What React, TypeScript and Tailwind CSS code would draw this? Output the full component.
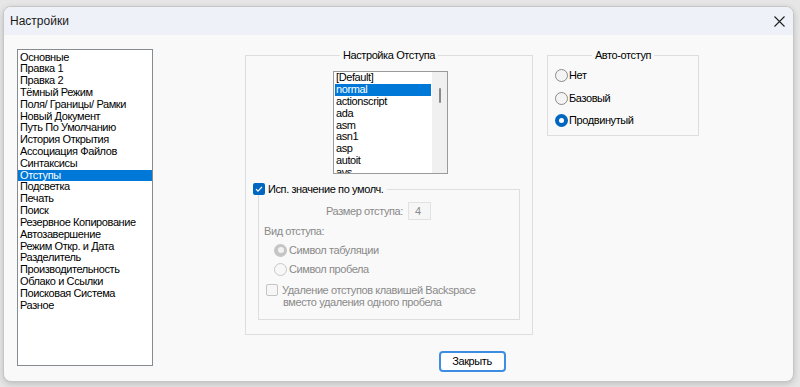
import React from "react";

const leftItems = [
  "Основные",
  "Правка 1",
  "Правка 2",
  "Тёмный Режим",
  "Поля/ Границы/ Рамки",
  "Новый Документ",
  "Путь По Умолчанию",
  "История Открытия",
  "Ассоциация Файлов",
  "Синтаксисы",
  "Отступы",
  "Подсветка",
  "Печать",
  "Поиск",
  "Резервное Копирование",
  "Автозавершение",
  "Режим Откр. и Дата",
  "Разделитель",
  "Производительность",
  "Облако и Ссылки",
  "Поисковая Система",
  "Разное",
];

const langs = ["[Default]", "normal", "actionscript", "ada", "asm", "asn1", "asp", "autoit", "avs"];

function Radio({ checked, disabled }: { checked?: boolean; disabled?: boolean }) {
  if (checked && !disabled) {
    return (
      <span className="w-[13px] h-[13px] rounded-full bg-[#0067c0] flex items-center justify-center shrink-0">
        <span className="w-[5px] h-[5px] rounded-full bg-white" />
      </span>
    );
  }
  if (checked && disabled) {
    return (
      <span className="w-[13px] h-[13px] rounded-full bg-[#c5c5c5] flex items-center justify-center shrink-0">
        <span className="w-[6px] h-[6px] rounded-full bg-[#f3f3f3]" />
      </span>
    );
  }
  return (
    <span
      className={
        "w-[13px] h-[13px] rounded-full border shrink-0 " +
        (disabled ? "border-[#c8c8c8] bg-[#f7f7f7]" : "border-[#8a8a8a] bg-[#f4f4f4]")
      }
    />
  );
}

export default function App() {
  const font = { fontFamily: '"Liberation Sans", Arial, sans-serif' };
  return (
    <div className="w-[800px] h-[387px] bg-[#e6e6e6] pt-[6px] pl-[3px] overflow-hidden" style={font}>
      <div className="w-[791px] h-[376px] rounded-[8px] border border-[#c6c6c6] bg-[#f9f9f9] flex flex-col overflow-hidden shadow-[0_2px_6px_rgba(0,0,0,0.18)]">
        {/* Title bar */}
        <div className="h-[28px] bg-[#eef2f8] flex items-center justify-between pl-[6px] pr-[8px] shrink-0">
          <span className="text-[12px] text-[#1a1a1a]">Настройки</span>
          <svg width="11" height="11" viewBox="0 0 11 11" className="mt-[1px]">
            <path d="M0.5 0.5 L10.5 10.5 M10.5 0.5 L0.5 10.5" stroke="#1f1f1f" strokeWidth="1.1" />
          </svg>
        </div>

        {/* Body */}
        <div className="flex items-start pl-[13px] pt-[14px] text-[11px] tracking-[-0.4px] text-black">
          {/* Left list */}
          <div className="w-[136px] h-[317px] border border-[#868a91] bg-white pt-[1.5px] shrink-0">
            {leftItems.map((t) => (
              <div
                key={t}
                className={
                  "h-[11.82px] leading-[11.82px] pl-[2px] whitespace-nowrap " +
                  (t === "Отступы" ? "bg-[#0078d7] text-white" : "")
                }
              >
                {t}
              </div>
            ))}
          </div>

          {/* Right column */}
          <div className="ml-[92px] mt-[6px] flex flex-col items-center">
            <div className="flex items-start">
              {/* Group 1 */}
              <div className="relative w-[288px] h-[280px] border border-[#dedede] flex flex-col pt-[15px]">
                <span className="absolute top-[-7px] left-1/2 -translate-x-1/2 bg-[#f9f9f9] px-[3px] leading-[12px] whitespace-nowrap">
                  Настройка Отступа
                </span>
                {/* lang list */}
                <div className="ml-[87px] w-[115px] h-[103px] border border-[#9a9a9a] bg-white flex overflow-hidden">
                  <div className="flex-1 pl-[1px] overflow-hidden">
                    {langs.map((l) => (
                      <div
                        key={l}
                        className={
                          "h-[11.9px] leading-[11.9px] pl-[1px] whitespace-nowrap " +
                          (l === "normal" ? "bg-[#0078d7] text-white" : "")
                        }
                      >
                        {l}
                      </div>
                    ))}
                  </div>
                  <div className="w-[15px] ml-[1px] bg-[#f0f0f0] flex justify-center pt-[16px]">
                    <div className="w-[2px] h-[15px] rounded-[1px] bg-[#8a8a8a]" />
                  </div>
                </div>

                {/* inner group */}
                <div className="relative ml-[12px] mt-[15px] w-[262px] h-[131px] border border-[#dedede] flex flex-col pt-[12px]">
                  <div className="absolute top-[-7px] left-[-6px] flex items-center bg-[#f9f9f9] pr-[4px]">
                    <span className="w-[12px] h-[12px] rounded-[2px] bg-[#0067c0] flex items-center justify-center">
                      <svg width="8" height="8" viewBox="0 0 8 8">
                        <path d="M1 4.2 L3 6.2 L7 1.8" stroke="white" strokeWidth="1.2" fill="none" />
                      </svg>
                    </span>
                    <span className="ml-[3px] leading-[12px] whitespace-nowrap">Исп. значение по умолч.</span>
                  </div>

                  <div className="flex items-center">
                    <span className="w-[144px] text-right text-[#8a8a8a] whitespace-nowrap">Размер отступа:</span>
                    <span className="ml-[5px] w-[23px] h-[18px] border border-[#e2e2e2] bg-[#f6f6f6] text-[#8a8a8a] flex items-center pl-[6px]">
                      4
                    </span>
                  </div>

                  <div className="mt-[5px] pl-[5px] leading-[12px] text-[#8a8a8a]">Вид отступа:</div>

                  <div className="mt-[6px] pl-[15px] h-[14px] flex items-center text-[#8a8a8a]">
                    <Radio checked disabled />
                    <span className="ml-[2px] whitespace-nowrap">Символ табуляции</span>
                  </div>
                  <div className="mt-[5px] pl-[15px] h-[14px] flex items-center text-[#8a8a8a]">
                    <Radio disabled />
                    <span className="ml-[2px] whitespace-nowrap">Символ пробела</span>
                  </div>

                  <div className="mt-[8px] pl-[7px] flex items-start text-[#8a8a8a]">
                    <span className="w-[12px] h-[12px] rounded-[2px] border border-[#c4c4c4] bg-[#f6f6f6] shrink-0" />
                    <span className="ml-[4px] leading-[12px] whitespace-nowrap">
                      Удаление отступов клавишей Backspace
                      <br />
                      <span className="pl-[1px]">вместо удаления одного пробела</span>
                    </span>
                  </div>
                </div>
              </div>

              {/* Group 2 */}
              <div className="relative ml-[14px] w-[152px] h-[81px] border border-[#dedede] flex flex-col pt-[12px] pl-[7px]">
                <span className="absolute top-[-7px] left-1/2 -translate-x-1/2 bg-[#f9f9f9] px-[3px] leading-[12px] whitespace-nowrap">
                  Авто-отступ
                </span>
                <div className="h-[14px] flex items-center">
                  <Radio />
                  <span className="ml-[1px]">Нет</span>
                </div>
                <div className="mt-[9px] h-[14px] flex items-center">
                  <Radio />
                  <span className="ml-[1px]">Базовый</span>
                </div>
                <div className="mt-[8px] h-[14px] flex items-center">
                  <Radio checked />
                  <span className="ml-[1px]">Продвинутый</span>
                </div>
              </div>
            </div>

            <button className="mt-[16px] w-[67px] h-[21px] rounded-[4px] border-2 border-[#3d8ee0] bg-white text-[11px] text-black flex items-center justify-center">
              Закрыть
            </button>
          </div>
        </div>
      </div>
    </div>
  );
}
